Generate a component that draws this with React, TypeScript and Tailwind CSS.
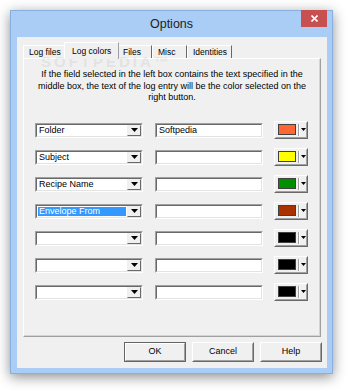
import React from 'react';

type Row = { field: string; text: string; color: string; selected?: boolean };

const rows: Row[] = [
  { field: 'Folder', text: 'Softpedia', color: '#ff6633' },
  { field: 'Subject', text: '', color: '#ffff00' },
  { field: 'Recipe Name', text: '', color: '#008f00' },
  { field: 'Envelope From', text: '', color: '#a93300', selected: true },
  { field: '', text: '', color: '#000000' },
  { field: '', text: '', color: '#000000' },
  { field: '', text: '', color: '#000000' },
];

const tabs = [
  { label: 'Log files', w: 'w-[43px]' },
  { label: 'Log colors', w: 'w-[55px]' },
  { label: 'Files', w: 'w-[35px]' },
  { label: 'Misc', w: 'w-[35px]' },
  { label: 'Identities', w: 'w-[45px]' },
];

function Arrow({ w = 7, h = 4 }: { w?: number; h?: number }) {
  return (
    <svg width={w} height={h} viewBox={`0 0 ${w} ${h}`} className="block">
      <polygon points={`0,0 ${w},0 ${w / 2},${h}`} fill="#000" />
    </svg>
  );
}

// sunken 3D frame used by combo and edit boxes
function Sunken({ children, className = '' }: { children?: React.ReactNode; className?: string }) {
  return (
    <div className={`border border-t-[#a0a0a0] border-l-[#a0a0a0] border-r-white border-b-white ${className}`}>
      <div className="h-full border border-t-[#696969] border-l-[#696969] border-r-[#e3e3e3] border-b-[#e3e3e3] bg-white flex">
        {children}
      </div>
    </div>
  );
}

function Combo({ value, selected }: { value: string; selected?: boolean }) {
  return (
    <Sunken className="w-[108px] h-[15px] mt-[2px]">
      <div className="flex-1 min-w-0 p-px flex">
        <div
          className={`flex-1 flex items-center pl-[1px] leading-none ${
            selected ? 'bg-[#3399ff] text-white' : 'text-black'
          }`}
        >
          {value}
        </div>
      </div>
      <div className="w-[14px] h-full bg-[#f0f0f0] border border-t-[#f0f0f0] border-l-[#f0f0f0] border-r-[#696969] border-b-[#696969] flex items-center justify-center">
        <Arrow />
      </div>
    </Sunken>
  );
}

function ColorButton({ color }: { color: string }) {
  return (
    <div className="w-[34px] h-[18px] border border-t-white border-l-white border-r-[#696969] border-b-[#696969] bg-[#f0f0f0]">
      <div className="h-full border border-t-[#f0f0f0] border-l-[#f0f0f0] border-r-[#a0a0a0] border-b-[#a0a0a0] flex items-center pl-[2px]">
        <div className="w-[19px] h-[11px] border border-[#404040]" style={{ backgroundColor: color }} />
        <div className="ml-[2px] w-[2px] h-[12px] border-l border-l-[#a0a0a0] border-r border-r-white" />
        <div className="ml-[1px]">
          <Arrow w={5} h={3} />
        </div>
      </div>
    </div>
  );
}

function PushButton({ label, isDefault }: { label: string; isDefault?: boolean }) {
  return (
    <div
      className={`w-[62px] h-[20px] border ${
        isDefault
          ? 'border-[#646464]'
          : 'border-t-white border-l-white border-r-[#696969] border-b-[#696969]'
      } bg-[#f0f0f0]`}
    >
      <div
        className={`h-full flex items-center justify-center border ${
          isDefault
            ? 'border-t-white border-l-white border-r-[#a0a0a0] border-b-[#a0a0a0]'
            : 'border-t-[#f0f0f0] border-l-[#f0f0f0] border-r-[#a0a0a0] border-b-[#a0a0a0]'
        }`}
      >
        {label}
      </div>
    </div>
  );
}

export default function App() {
  return (
    <div
      className="w-[350px] h-[391px] bg-white overflow-hidden pt-[10px] pl-[10px] text-[9px] text-black"
      style={{ fontFamily: '"Liberation Sans", Arial, sans-serif' }}
    >
      <div className="relative w-[323px] h-[364px] bg-[#a9cdf4] border border-[#88afe0] shadow-[0_3px_12px_rgba(0,0,0,0.45)] flex flex-col">
        {/* Title bar */}
        <div className="relative h-[26px] flex items-center justify-center text-[12.5px] text-[#1e1e1e]">
          Options
          <div className="absolute right-[5px] top-[-1px] w-[26px] h-[17px] bg-[#c75050] flex items-center justify-center">
            <svg width="7" height="7" viewBox="0 0 7 7">
              <path d="M0.5 0.5 L6.5 6.5 M6.5 0.5 L0.5 6.5" stroke="#fff" strokeWidth="1.6" />
            </svg>
          </div>
        </div>

        {/* Client area */}
        <div className="flex-1 ml-[6px] mr-[5px] mb-[5px] bg-[#f0f0f0] flex flex-col">
          {/* Tabs */}
          <div className="h-[21px] pl-[6px] flex items-end text-[8.5px]">
            {tabs.map((t) => {
              const sel = t.label === 'Log colors';
              return sel ? (
                <div
                  key={t.label}
                  className={`relative z-10 -mb-px -mx-[2px] ${t.w} h-[17px] pl-[7px] pt-[2px] bg-[#f0f0f0] border-t border-l border-t-white border-l-white border-r border-r-[#a0a0a0] whitespace-nowrap`}
                >
                  {t.label}
                </div>
              ) : (
                <div
                  key={t.label}
                  className={`${t.w} h-[13px] pl-[5px] border-t border-l border-t-white border-l-white border-r border-r-[#696969] flex items-center whitespace-nowrap`}
                >
                  {t.label}
                </div>
              );
            })}
          </div>

          {/* Tab page */}
          <div className="mx-[6px] h-[279px] border border-t-white border-l-white border-r-[#a0a0a0] border-b-[#a0a0a0] shadow-[inset_-1px_-1px_0_#d4d4d4] pt-[10px] pl-[11px]">
            <p className="text-center leading-[11.5px] pr-[11px]">
              If the field selected in the left box contains the text specified in the
              <br />
              middle box, the text of the log entry will be the color selected on the
              <br />
              right button.
            </p>
            <div className="mt-[17px] flex flex-col gap-[9px]">
              {rows.map((r, i) => (
                <div key={i} className="h-[18px] flex items-start">
                  <Combo value={r.field} selected={r.selected} />
                  <Sunken className="ml-[12px] w-[108px] h-[15px] mt-[2px]">
                    <div className="flex-1 flex items-center pl-[2px] leading-none">{r.text}</div>
                  </Sunken>
                  <div className="ml-[11px]">
                    <ColorButton color={r.color} />
                  </div>
                </div>
              ))}
            </div>
          </div>

          {/* Dialog buttons */}
          <div className="mt-[5px] h-[20px] pr-[5px] flex justify-end gap-[6px]">
            <PushButton label="OK" isDefault />
            <PushButton label="Cancel" />
            <PushButton label="Help" />
          </div>
        </div>

        {/* watermark */}
        <div className="absolute left-[30px] top-[40px] text-[15px] font-bold tracking-[3px] text-black opacity-[0.05] pointer-events-none">
          SOFTPEDIA™
        </div>
      </div>
    </div>
  );
}
